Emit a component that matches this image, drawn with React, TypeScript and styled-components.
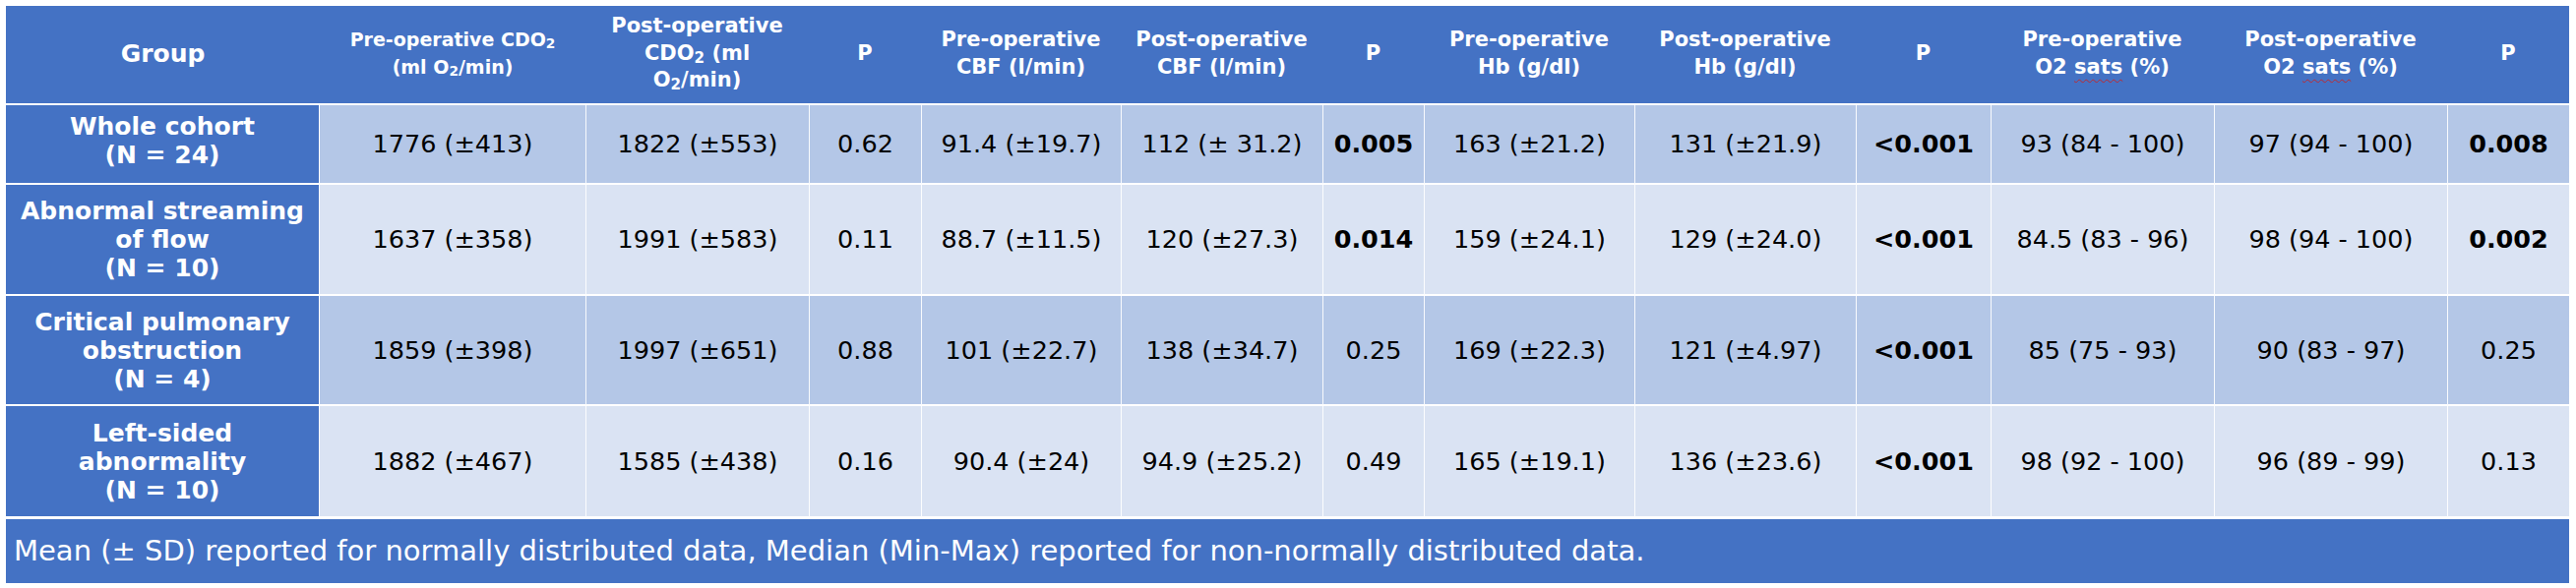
import { Fragment } from "react";
import styled, { createGlobalStyle } from "styled-components";

const GlobalStyle = createGlobalStyle`
  html, body {
    margin: 0;
    padding: 0;
    background: #ffffff;
  }
  body {
    font-family: "DejaVu Sans", Verdana, sans-serif;
  }
`;

const BLUE = "#4472c4";
const BAND_DARK = "#b4c7e7";
const BAND_LIGHT = "#dae3f3";

const Page = styled.div`
  padding: 6px 0 0 6px;
`;

const Table = styled.table`
  table-layout: fixed;
  border-collapse: separate;
  border-spacing: 0;
  width: 2605px;
`;

const Row = styled.tr<{ $h: number }>`
  height: ${({ $h }) => $h}px;
`;

const HeadCell = styled.th<{ $size?: number }>`
  background: ${BLUE};
  color: #ffffff;
  font-size: ${({ $size }) => $size ?? 21}px;
  font-weight: 700;
  line-height: 27.5px;
  text-align: center;
  vertical-align: middle;
  padding: 0 2px 2px;
  border-bottom: 2px solid #ffffff;
  white-space: nowrap;
`;

const Sub = styled.sub`
  font-size: 0.72em;
  vertical-align: -0.18em;
  line-height: 0;
`;

const Squiggle = styled.span`
  text-decoration: underline wavy #c0282d;
  text-decoration-thickness: 1px;
  text-underline-offset: 5px;
  text-decoration-skip-ink: none;
`;

const GroupCell = styled.th<{ $last?: boolean; $lift?: number }>`
  background: ${BLUE};
  color: #ffffff;
  font-size: 25px;
  font-weight: 700;
  line-height: 29px;
  text-align: center;
  vertical-align: middle;
  padding: 0 2px ${({ $lift }) => $lift ?? 0}px;
  white-space: nowrap;
  border-bottom: ${({ $last }) => ($last ? 3 : 2)}px solid #ffffff;
  border-right: 1px solid #ffffff;
`;

const DataCell = styled.td<{ $band: "dark" | "light"; $bold?: boolean; $last?: boolean }>`
  background: ${({ $band }) => ($band === "dark" ? BAND_DARK : BAND_LIGHT)};
  color: #000000;
  font-size: 25.5px;
  font-weight: ${({ $bold }) => ($bold ? 700 : 400)};
  line-height: 29px;
  text-align: center;
  vertical-align: middle;
  padding: 0 2px;
  white-space: nowrap;
  border-bottom: ${({ $last }) => ($last ? 3 : 2)}px solid #ffffff;
  & + & {
    border-left: 1px solid rgba(255, 255, 255, 0.9);
  }
`;

const FootCell = styled.td`
  background: ${BLUE};
  color: #ffffff;
  font-size: 29px;
  line-height: 34px;
  text-align: left;
  vertical-align: middle;
  padding: 0 0 2px 8px;
  white-space: nowrap;
`;

const widths = [319, 270, 227, 114, 203, 205, 103, 214, 225, 137, 227, 237, 124];

type Cell = { v: string; b?: boolean };

const rows: { group: string[]; h: number; lift?: number; cells: Cell[] }[] = [
  {
    group: ["Whole cohort", "(N = 24)"],
    h: 81,
    lift: 8,
    cells: [
      { v: "1776 (±413)" },
      { v: "1822 (±553)" },
      { v: "0.62" },
      { v: "91.4 (±19.7)" },
      { v: "112 (± 31.2)" },
      { v: "0.005", b: true },
      { v: "163 (±21.2)" },
      { v: "131 (±21.9)" },
      { v: "<0.001", b: true },
      { v: "93 (84 - 100)" },
      { v: "97 (94 - 100)" },
      { v: "0.008", b: true },
    ],
  },
  {
    group: ["Abnormal streaming", "of flow", "(N = 10)"],
    h: 113,
    cells: [
      { v: "1637 (±358)" },
      { v: "1991 (±583)" },
      { v: "0.11" },
      { v: "88.7 (±11.5)" },
      { v: "120 (±27.3)" },
      { v: "0.014", b: true },
      { v: "159 (±24.1)" },
      { v: "129 (±24.0)" },
      { v: "<0.001", b: true },
      { v: "84.5 (83 - 96)" },
      { v: "98 (94 - 100)" },
      { v: "0.002", b: true },
    ],
  },
  {
    group: ["Critical pulmonary", "obstruction", "(N = 4)"],
    h: 112,
    cells: [
      { v: "1859 (±398)" },
      { v: "1997 (±651)" },
      { v: "0.88" },
      { v: "101 (±22.7)" },
      { v: "138 (±34.7)" },
      { v: "0.25" },
      { v: "169 (±22.3)" },
      { v: "121 (±4.97)" },
      { v: "<0.001", b: true },
      { v: "85 (75 - 93)" },
      { v: "90 (83 - 97)" },
      { v: "0.25" },
    ],
  },
  {
    group: ["Left-sided", "abnormality", "(N = 10)"],
    h: 115,
    cells: [
      { v: "1882 (±467)" },
      { v: "1585 (±438)" },
      { v: "0.16" },
      { v: "90.4 (±24)" },
      { v: "94.9 (±25.2)" },
      { v: "0.49" },
      { v: "165 (±19.1)" },
      { v: "136 (±23.6)" },
      { v: "<0.001", b: true },
      { v: "98 (92 - 100)" },
      { v: "96 (89 - 99)" },
      { v: "0.13" },
    ],
  },
];

function Lines({ parts }: { parts: string[] }) {
  return (
    <>
      {parts.map((p, i) => (
        <Fragment key={i}>
          {i > 0 && <br />}
          {p}
        </Fragment>
      ))}
    </>
  );
}

export default function App() {
  return (
    <Page>
      <GlobalStyle />
      <Table>
        <colgroup>
          {widths.map((w, i) => (
            <col key={i} style={{ width: w }} />
          ))}
        </colgroup>
        <thead>
          <Row $h={101}>
            <HeadCell $size={25}>Group</HeadCell>
            <HeadCell $size={19}>
              Pre-operative CDO<Sub>2</Sub>
              <br />
              (ml O<Sub>2</Sub>/min)
            </HeadCell>
            <HeadCell>
              Post-operative
              <br />
              CDO<Sub>2</Sub> (ml
              <br />
              O<Sub>2</Sub>/min)
            </HeadCell>
            <HeadCell>P</HeadCell>
            <HeadCell>
              Pre-operative
              <br />
              CBF (l/min)
            </HeadCell>
            <HeadCell>
              Post-operative
              <br />
              CBF (l/min)
            </HeadCell>
            <HeadCell>P</HeadCell>
            <HeadCell>
              Pre-operative
              <br />
              Hb (g/dl)
            </HeadCell>
            <HeadCell>
              Post-operative
              <br />
              Hb (g/dl)
            </HeadCell>
            <HeadCell>P</HeadCell>
            <HeadCell>
              Pre-operative
              <br />
              O2 <Squiggle>sats</Squiggle> (%)
            </HeadCell>
            <HeadCell>
              Post-operative
              <br />
              O2 <Squiggle>sats</Squiggle> (%)
            </HeadCell>
            <HeadCell>P</HeadCell>
          </Row>
        </thead>
        <tbody>
          {rows.map((r, ri) => {
            const band = ri % 2 === 0 ? "dark" : "light";
            const last = ri === rows.length - 1;
            return (
              <Row key={ri} $h={r.h}>
                <GroupCell $last={last} $lift={r.lift}>
                  <Lines parts={r.group} />
                </GroupCell>
                {r.cells.map((c, ci) => (
                  <DataCell key={ci} $band={band} $bold={c.b} $last={last}>
                    {c.v}
                  </DataCell>
                ))}
              </Row>
            );
          })}
          <Row $h={65}>
            <FootCell colSpan={13}>
              Mean (± SD) reported for normally distributed data, Median (Min-Max) reported for
              non-normally distributed data.
            </FootCell>
          </Row>
        </tbody>
      </Table>
    </Page>
  );
}
